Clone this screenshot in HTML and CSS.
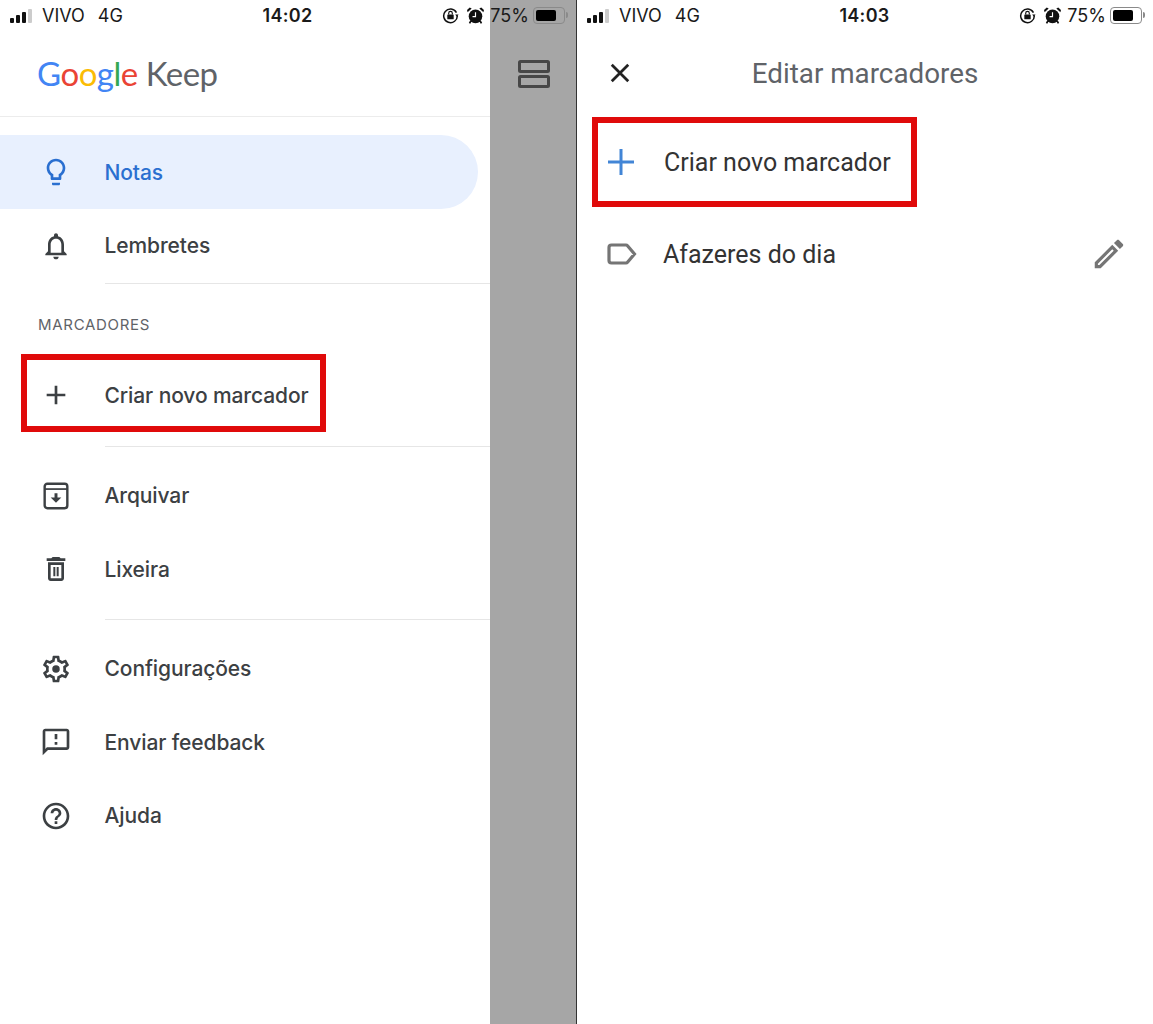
FILE: index.html
```html
<!DOCTYPE html>
<html lang="en">
<head>
  <meta charset="UTF-8" />
  <title>Google Keep - Criar novo marcador</title>
  <link rel="stylesheet" href="styles.css">
</head>
<body>

  <div class="page">

    <!-- left phone: drawer open -->
    <section class="screen screen-left">
      <div class="status-bar">
        <div class="status-left">
          <svg class="signal" viewBox="0 0 24 14"><rect x="0" y="9" width="4" height="5" rx="1"/><rect x="6" y="6" width="4" height="8" rx="1"/><rect x="12" y="3" width="4" height="11" rx="1"/><rect class="signal-off" x="18" y="0" width="4" height="14" rx="1"/></svg>
          <span class="carrier">VIVO</span>
          <span class="network">4G</span>
        </div>
        <div class="clock">14:02</div>
        <div class="status-right">
          <svg class="rotation" viewBox="0 0 16 16"><path d="M13.6 5.2A6.4 6.4 0 1 0 14.4 8" fill="none" stroke="#111" stroke-width="1.4"/><path d="M12.4 7h3.2l-1.6 2.2z" fill="#111"/><rect x="5" y="7" width="6" height="4.6" rx=".6" fill="#111"/><path d="M6.3 7V5.8a1.7 1.7 0 0 1 3.4 0V7" fill="none" stroke="#111" stroke-width="1.1"/></svg>
          <svg class="alarm" viewBox="0 0 16 16"><circle cx="8" cy="8.8" r="6.400" fill="#111"/><path d="M.6 5 4.400 1.400 2.600.4 0 2.800zM15.400 5 11.600 1.400 13.400.4 16 2.800z" fill="#111"/><path d="M8 5v4H5.200" fill="none" stroke="#fff" stroke-width="1.100"/><path d="M3.600 13.200 2.400 15.400M12.400 13.200 13.600 15.400" stroke="#111" stroke-width="1.600"/></svg>
          <span class="percent">75%</span>
          <span class="battery"><span class="battery-level"></span></span>
        </div>
      </div>

      <aside class="drawer">
        <header class="drawer-head">
          <div class="logo"><span class="blue">G</span><span class="red">o</span><span class="yellow">o</span><span class="blue">g</span><span class="green">l</span><span class="red">e</span> <span class="keep">Keep</span></div>
        </header>

        <nav class="menu">
          <a class="item active">
            <svg class="icon" viewBox="0 0 24 24"><path d="M9 21c0 .55.45 1 1 1h4c.55 0 1-.45 1-1v-1H9v1zm3-19C8.14 2 5 5.14 5 9c0 2.38 1.19 4.47 3 5.74V17c0 .55.45 1 1 1h6c.55 0 1-.45 1-1v-2.26c1.81-1.27 3-3.36 3-5.74 0-3.86-3.14-7-7-7zm2.85 11.1l-.85.6V16h-4v-2.3l-.85-.6C7.8 12.16 7 10.63 7 9c0-2.76 2.24-5 5-5s5 2.24 5 5c0 1.63-.8 3.16-2.15 4.1z"/></svg>
            <span>Notas</span>
          </a>
          <a class="item">
            <svg class="icon" viewBox="0 0 24 24"><path d="M12 22c1.1 0 2-.9 2-2h-4c0 1.1.9 2 2 2zm6-6v-5c0-3.07-1.63-5.64-4.5-6.32V4c0-.83-.67-1.5-1.5-1.5s-1.5.67-1.5 1.5v.68C7.64 5.36 6 7.92 6 11v5l-2 2v1h16v-1l-2-2zm-2 1H8v-6c0-2.48 1.51-4.5 4-4.5s4 2.02 4 4.5v6z"/></svg>
            <span>Lembretes</span>
          </a>
          <hr class="divider">
          <div class="section-label">MARCADORES</div>
          <a class="item marked">
            <svg class="icon" viewBox="0 0 24 24"><path d="M19 13h-6v6h-2v-6H5v-2h6V5h2v6h6v2z"/></svg>
            <span>Criar novo marcador</span>
          </a>
          <hr class="divider divider-after-create">
          <a class="item item-first">
            <svg class="icon" viewBox="0 0 24 24"><rect x="3.500" y="2.800" width="17" height="18.400" rx="2" fill="none" stroke="#3c4043" stroke-width="1.800"/><path d="M3.500 6.800h17" stroke="#3c4043" stroke-width="1.300"/><path d="M10.900 10h2.200v3.200H16l-4 3.800-4-3.800h2.900z"/></svg>
            <span>Arquivar</span>
          </a>
          <a class="item">
            <svg class="icon" viewBox="0 0 24 24"><path d="M6 19c0 1.100.9 2 2 2h8c1.100 0 2-.9 2-2V7H6v12zM8 9h8v10H8V9zm7.500-5l-1-1h-5l-1 1H5v2h14V4z"/><path d="M10 10.500h1.500v7H10zM12.500 10.500H14v7h-1.500z"/></svg>
            <span>Lixeira</span>
          </a>
          <hr class="divider divider-after-trash">
          <a class="item item-first">
            <svg class="icon" viewBox="0 0 24 24"><path d="M19.430 12.980c.04-.32.07-.64.07-.98 0-.34-.03-.66-.07-.98l2.110-1.650c.19-.15.24-.42.12-.64l-2-3.460c-.09-.16-.26-.25-.44-.25-.06 0-.12.01-.17.03l-2.490 1c-.52-.4-1.080-.73-1.690-.98l-.38-2.650C14.460 2.180 14.250 2 14 2h-4c-.25 0-.46.18-.49.42l-.38 2.650c-.61.25-1.170.59-1.690.98l-2.490-1c-.06-.02-.12-.03-.18-.03-.17 0-.34.09-.43.25l-2 3.460c-.13.22-.07.49.12.64l2.110 1.650c-.04.32-.07.65-.07.98 0 .33.03.66.07.98l-2.110 1.650c-.19.15-.24.42-.12.64l2 3.460c.09.16.26.25.44.25.06 0 .12-.01.17-.03l2.490-1c.52.4 1.080.73 1.690.98l.38 2.650c.03.24.24.42.49.42h4c.25 0 .46-.18.49-.42l.38-2.650c.61-.25 1.170-.59 1.690-.98l2.490 1c.06.02.12.03.18.03.17 0 .34-.09.43-.25l2-3.460c.12-.22.07-.49-.12-.64l-2.110-1.650zm-1.980-1.710c.04.31.05.52.05.73 0 .21-.02.43-.05.73l-.14 1.130.89.7 1.080.84-.7 1.210-1.270-.51-1.040-.42-.9.68c-.43.32-.84.56-1.250.73l-1.060.43-.16 1.130-.2 1.350h-1.400l-.19-1.350-.16-1.130-1.060-.43c-.43-.18-.83-.41-1.230-.71l-.91-.7-1.060.43-1.270.51-.7-1.210 1.080-.84.89-.7-.14-1.130c-.03-.31-.05-.54-.05-.74s.02-.43.05-.73l.14-1.130-.89-.7-1.080-.84.7-1.210 1.270.51 1.040.42.9-.68c.43-.32.84-.56 1.250-.73l1.060-.43.16-1.130.2-1.350h1.390l.19 1.350.16 1.130 1.060.43c.43.18.83.41 1.230.71l.91.7 1.060-.43 1.270-.51.7 1.210-1.070.85-.89.7.14 1.130z"/><circle cx="12" cy="12" r="2.800"/></svg>
            <span>Configurações</span>
          </a>
          <a class="item">
            <svg class="icon" viewBox="0 0 24 24"><path d="M20 2H4c-1.100 0-1.990.9-1.990 2L2 22l4-4h14c1.100 0 2-.9 2-2V4c0-1.100-.9-2-2-2zm0 14H5.170L4 17.170V4h16v12zM11 12h2v2h-2zm0-6h2v4h-2z"/></svg>
            <span>Enviar feedback</span>
          </a>
          <a class="item">
            <svg class="icon" viewBox="0 0 24 24"><path d="M11 18h2v-2h-2v2zm1-16C6.480 2 2 6.480 2 12s4.480 10 10 10 10-4.480 10-10S17.520 2 12 2zm0 18c-4.410 0-8-3.590-8-8s3.590-8 8-8 8 3.590 8 8-3.590 8-8 8zm0-14c-2.210 0-4 1.790-4 4h2c0-1.100.9-2 2-2s2 .9 2 2c0 2-3 1.750-3 5h2c0-2.250 3-2.500 3-5 0-2.210-1.790-4-4-4z"/></svg>
            <span>Ajuda</span>
          </a>
        </nav>
      </aside>

      <div class="scrim">
        <svg class="grid-view" viewBox="0 0 32 28"><rect x="1.500" y="1.500" width="29" height="10" rx="1"/><rect x="1.500" y="16.500" width="29" height="10" rx="1"/></svg>
      </div>
    </section>

    <!-- right phone: edit labels -->
    <section class="screen screen-right">
      <div class="status-bar">
        <div class="status-left">
          <svg class="signal" viewBox="0 0 24 14"><rect x="0" y="9" width="4" height="5" rx="1"/><rect x="6" y="6" width="4" height="8" rx="1"/><rect x="12" y="3" width="4" height="11" rx="1"/><rect class="signal-off" x="18" y="0" width="4" height="14" rx="1"/></svg>
          <span class="carrier">VIVO</span>
          <span class="network">4G</span>
        </div>
        <div class="clock">14:03</div>
        <div class="status-right">
          <svg class="rotation" viewBox="0 0 16 16"><path d="M13.6 5.2A6.4 6.4 0 1 0 14.4 8" fill="none" stroke="#111" stroke-width="1.4"/><path d="M12.4 7h3.2l-1.6 2.2z" fill="#111"/><rect x="5" y="7" width="6" height="4.6" rx=".6" fill="#111"/><path d="M6.3 7V5.8a1.7 1.7 0 0 1 3.4 0V7" fill="none" stroke="#111" stroke-width="1.1"/></svg>
          <svg class="alarm" viewBox="0 0 16 16"><circle cx="8" cy="8.8" r="6.400" fill="#111"/><path d="M.6 5 4.400 1.400 2.600.4 0 2.800zM15.400 5 11.600 1.400 13.400.4 16 2.800z" fill="#111"/><path d="M8 5v4H5.200" fill="none" stroke="#fff" stroke-width="1.100"/><path d="M3.600 13.200 2.400 15.400M12.400 13.200 13.600 15.400" stroke="#111" stroke-width="1.600"/></svg>
          <span class="percent">75%</span>
          <span class="battery"><span class="battery-level"></span></span>
        </div>
      </div>

      <header class="edit-head">
        <svg class="close" viewBox="0 0 24 24"><path d="M3 3l18 18M21 3L3 21"/></svg>
        <h1>Editar marcadores</h1>
      </header>

      <a class="edit-row marked-edit">
        <svg class="plus" viewBox="0 0 26 26"><path d="M13 0v26M0 13h26"/></svg>
        <span>Criar novo marcador</span>
      </a>
      <a class="edit-row">
        <svg class="tag" viewBox="0 0 30 22"><path d="M4.500 2h14.500a2 2 0 0 1 1.500.7l7 8.300-7 8.300a2 2 0 0 1-1.500.7H4.500A2.500 2.500 0 0 1 2 17.500v-13A2.500 2.500 0 0 1 4.500 2z"/></svg>
        <span>Afazeres do dia</span>
        <svg class="pencil" viewBox="0 0 24 24"><path d="M14.060 9.020l.92.92L5.920 19H5v-.92l9.060-9.060M17.660 3c-.25 0-.51.1-.7.29l-1.830 1.830 3.750 3.750 1.830-1.830c.39-.39.39-1.020 0-1.410l-2.340-2.340c-.2-.2-.45-.29-.71-.29zm-3.600 3.190L3 17.250V21h3.750L17.810 9.940l-3.750-3.750z"/></svg>
      </a>
    </section>

  </div>

</body>
</html>
```

FILE: styles.css
```css
*, *::after {
  box-sizing: border-box;
}

body {
  margin: 0;
  background: #fff;
  font-family: 'Roboto', sans-serif;
  color: #3c4043;
}

.page {
  display: flex;
  width: 1153px;
  height: 1024px;
  overflow: hidden;
}

.screen {
  position: relative;
  height: 1024px;
}

.screen-left {
  display: flex;
  width: 577px;
  border-right: 1px solid #333;
}

.screen-right {
  width: 576px;
  padding-top: 32px;
}

/* status bar sits over the drawer and the scrim */
.status-bar {
  position: absolute;
  top: 0;
  left: 0;
  right: 0;
  height: 31px;
  padding: 0 11px 0 10px;
  display: grid;
  grid-template-columns: 1fr auto 1fr;
  align-items: center;
  font-family: 'Inter', sans-serif;
  font-size: 18px;
  color: #1a1a1a;
}

.status-left {
  display: flex;
  align-items: center;
}

.signal {
  width: 24px;
  height: 14px;
  fill: #111;
  margin-right: 8px;
}

.signal-off {
  fill: #ccc;
}

.network {
  margin-left: 13px;
}

.clock {
  font-weight: 600;
  letter-spacing: 0.3px;
}

.status-right {
  display: flex;
  align-items: center;
  justify-content: flex-end;
}

.rotation {
  width: 17px;
  height: 17px;
  margin-right: 8px;
}

.alarm {
  width: 17px;
  height: 17px;
  margin-right: 6px;
}

.percent {
  margin-right: 4px;
}

.battery {
  position: relative;
  display: block;
  width: 32px;
  height: 17px;
  border: 1.5px solid #8a8a8a;
  border-radius: 4px;
  padding: 2px;
}

.battery::after {
  content: "";
  position: absolute;
  top: 4px;
  right: -4px;
  width: 2px;
  height: 6px;
  border-radius: 0 2px 2px 0;
  background: #8a8a8a;
}

.battery-level {
  display: block;
  width: 75%;
  height: 100%;
  border-radius: 2px;
  background: #000;
}

/* drawer */
.drawer {
  width: 490px;
  background: #fff;
}

.drawer-head {
  height: 117px;
  padding: 52px 0 0 37px;
  border-bottom: 1px solid #ececec;
}

.logo {
  font-family: 'Lato', sans-serif;
  font-size: 33px;
  line-height: 42px;
  letter-spacing: -0.5px;
}

.blue { color: #4285f4; }
.red { color: #ea4335; }
.yellow { color: #fbbc05; }
.green { color: #34a853; }

.keep {
  color: #5f6368;
}

.menu {
  padding-top: 18px;
}

.item {
  position: relative;
  display: flex;
  align-items: center;
  height: 73.5px;
  padding-left: 39.5px;
  font-family: 'Inter', sans-serif;
  font-size: 21px;
  font-weight: 500;
  letter-spacing: -0.1px;
  color: #3c4043;
}

.icon {
  width: 32px;
  height: 32px;
  margin-right: 33px;
  fill: #3c4043;
  flex-shrink: 0;
}

.item.active {
  width: 478px;
  height: 74px;
  border-radius: 0 37px 37px 0;
  background: #e8f0fe;
  color: #2a6fd0;
}

.item.active .icon {
  fill: #2a6fd0;
}

.divider {
  height: 1px;
  margin: 0 0 0 105px;
  border: 0;
  background: #e6e6e6;
}

.divider-after-create {
  margin-top: 14px;
}

.divider-after-trash {
  margin-top: 13px;
}

.item-first {
  margin-top: 12px;
}

.section-label {
  padding: 32px 0 25px 38px;
  font-family: 'Inter', sans-serif;
  font-size: 15px;
  line-height: 18px;
  font-weight: 400;
  letter-spacing: 0.7px;
  color: #5f6368;
}

/* red annotation boxes */
.marked::after,
.marked-edit::after {
  content: "";
  position: absolute;
  border: 6px solid #e00a0a;
}

.marked::after {
  left: 21px;
  top: -5px;
  width: 305px;
  height: 78px;
}

.marked-edit::after {
  left: 15px;
  top: 1px;
  width: 325px;
  height: 90px;
}

.scrim {
  flex: 1;
  background: #a6a6a6;
  padding: 60px 0 0 28px;
}

.grid-view {
  display: block;
  width: 32px;
  height: 28px;
  fill: none;
  stroke: #474747;
  stroke-width: 3;
}

/* edit labels */
.edit-head {
  display: flex;
  align-items: center;
  justify-content: center;
  position: relative;
  height: 84px;
  padding-bottom: 2px;
}

.edit-head h1 {
  margin: 0;
  font-size: 27.8px;
  font-weight: 400;
  color: #5f6368;
}

.close {
  position: absolute;
  left: 32px;
  top: 30px;
  width: 22px;
  height: 22px;
  fill: none;
  stroke: #222;
  stroke-width: 3;
}

.edit-row {
  position: relative;
  display: flex;
  align-items: center;
  height: 92px;
  padding: 0 30px 0 31px;
  font-size: 25px;
  color: #333;
}

.plus {
  width: 26px;
  height: 26px;
  margin-right: 30px;
  fill: none;
  stroke: #4285d6;
  stroke-width: 3;
}

.tag {
  width: 30px;
  height: 22px;
  margin: 0 26px 0 -1px;
  fill: none;
  stroke: #757575;
  stroke-width: 3.2;
}

.pencil {
  width: 38px;
  height: 38px;
  margin-left: auto;
  margin-right: -5px;
  fill: #757575;
}
```
